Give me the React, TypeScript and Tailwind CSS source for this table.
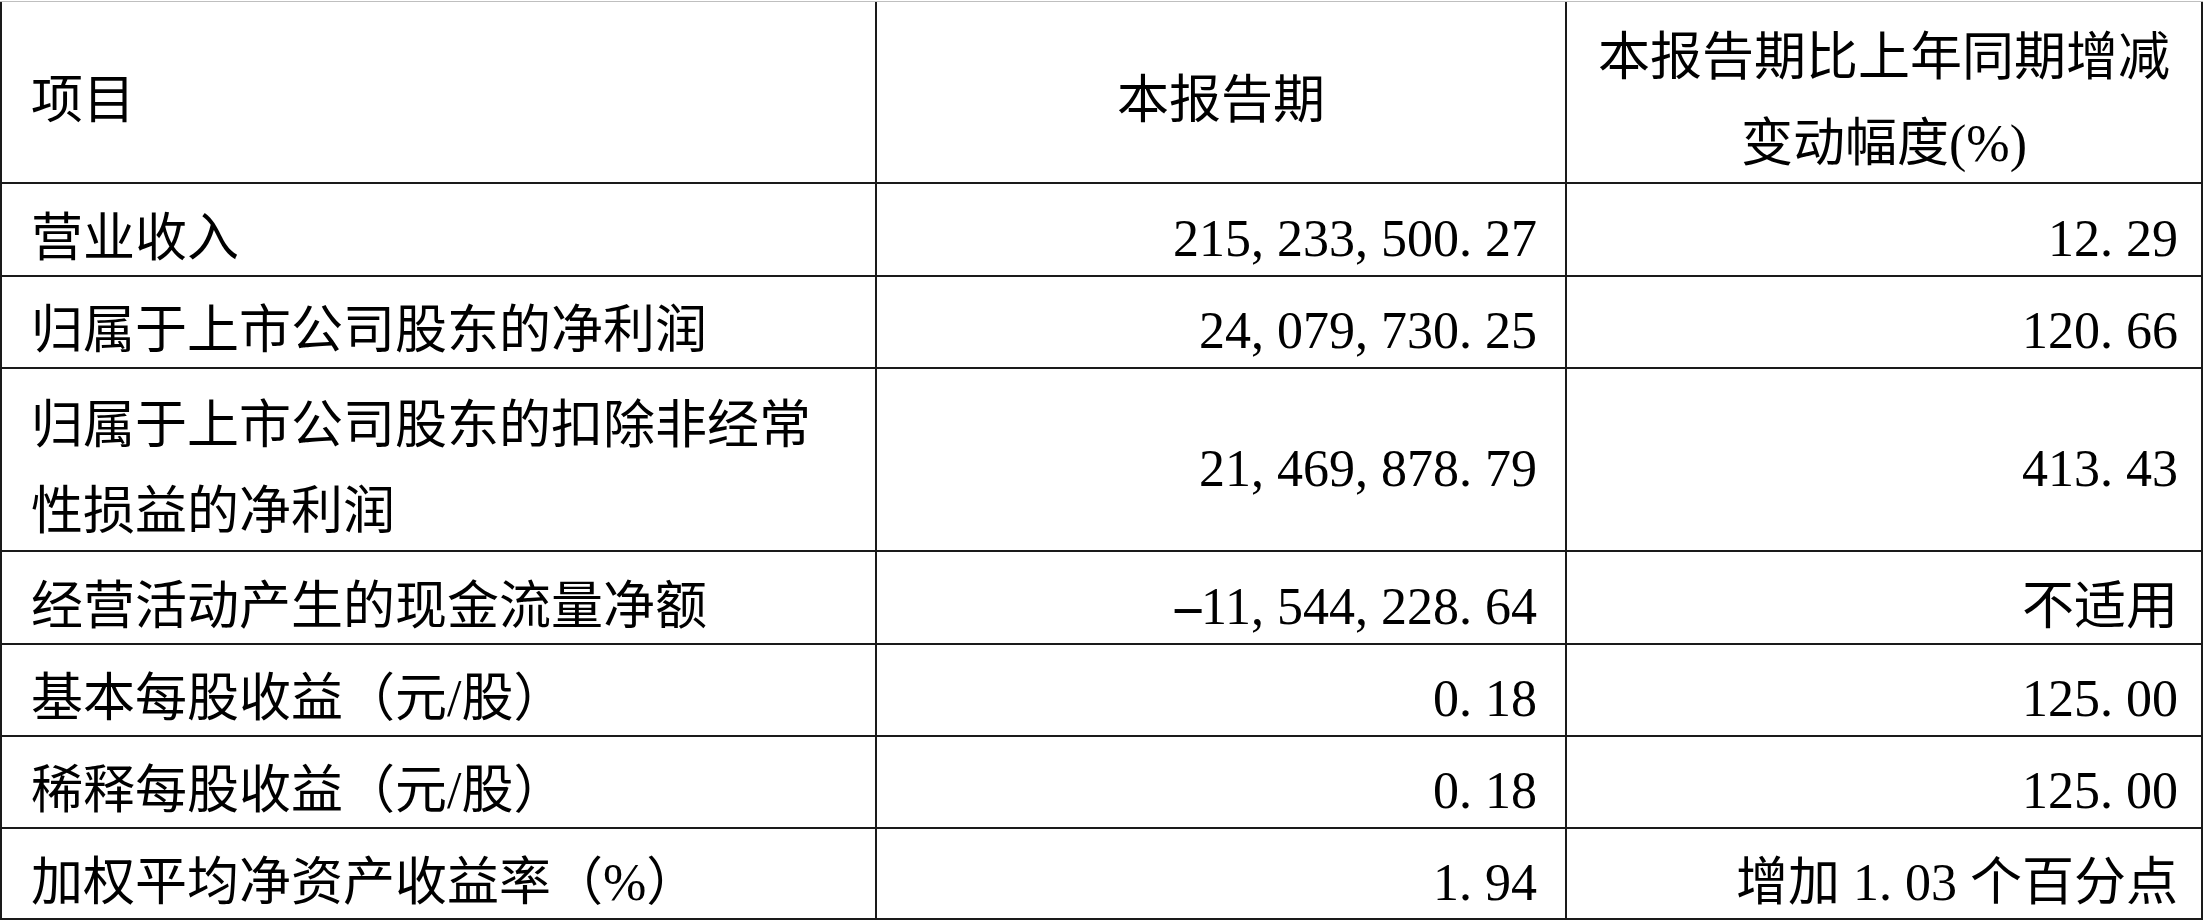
import React from "react";

const Num = ({ s }: { s: string }) => (
  <span className="whitespace-nowrap">
    {s.split("").map((c, i) =>
      c === "," || c === "." ? (
        <span key={i} className="inline-block w-[26px] text-left">
          {c}
        </span>
      ) : c === "-" ? (
        <span key={i} className="inline-block w-[26px] text-center scale-x-[2]">
          -
        </span>
      ) : (
        <span key={i}>{c}</span>
      )
    )}
  </span>
);

type Row = { label: React.ReactNode; a: React.ReactNode; b: React.ReactNode };

const rows: Row[] = [
  { label: "营业收入", a: <Num s="215,233,500.27" />, b: <Num s="12.29" /> },
  { label: "归属于上市公司股东的净利润", a: <Num s="24,079,730.25" />, b: <Num s="120.66" /> },
  {
    label: (
      <>
        <div>归属于上市公司股东的扣除非经常</div>
        <div>性损益的净利润</div>
      </>
    ),
    a: <Num s="21,469,878.79" />,
    b: <Num s="413.43" />,
  },
  { label: "经营活动产生的现金流量净额", a: <Num s="-11,544,228.64" />, b: "不适用" },
  { label: "基本每股收益（元/股）", a: <Num s="0.18" />, b: <Num s="125.00" /> },
  { label: "稀释每股收益（元/股）", a: <Num s="0.18" />, b: <Num s="125.00" /> },
  {
    label: "加权平均净资产收益率（%）",
    a: <Num s="1.94" />,
    b: (
      <span className="whitespace-nowrap">
        增加 <Num s="1.03" /> 个百分点
      </span>
    ),
  },
];

const cell = "bg-white flex flex-col justify-center pt-[18px] whitespace-nowrap";

export default function App() {
  return (
    <div className="min-h-screen bg-white">
      <div className="w-[2203px] mt-px border-t border-[#bfbfbf] font-['Liberation_Serif','Noto_Sans_CJK_SC',serif] text-[52px] leading-[86px] text-black">
        <div className="grid grid-cols-[873px_688px_634px] grid-rows-[180px_91px_90px_181px_91px_90px_90px_89px] gap-[2px] bg-[#1a1a1a] px-[2px] pb-[2px]">
          <div className={`${cell} items-start pl-[29px]`}>项目</div>
          <div className={`${cell} items-center`}>本报告期</div>
          <div className={`${cell} items-center`}>
            <div>本报告期比上年同期增减</div>
            <div>变动幅度(%)</div>
          </div>
          {rows.map((r, i) => (
            <React.Fragment key={i}>
              <div className={`${cell} items-start pl-[29px]`}>{r.label}</div>
              <div className={`${cell} items-end pr-[28px]`}>{r.a}</div>
              <div className={`${cell} items-end pr-[23px]`}>{r.b}</div>
            </React.Fragment>
          ))}
        </div>
      </div>
    </div>
  );
}
